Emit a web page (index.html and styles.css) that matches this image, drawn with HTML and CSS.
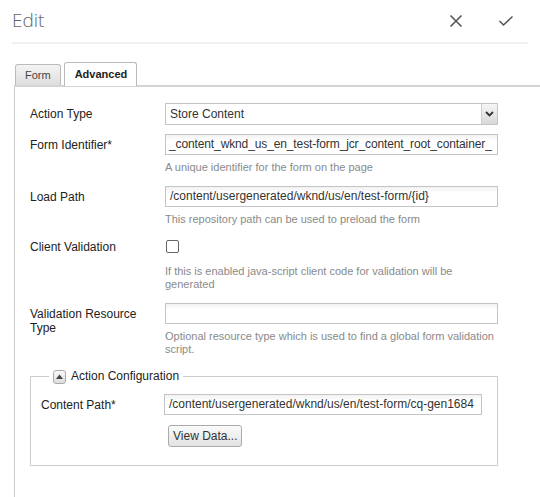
FILE: index.html
```html
<!DOCTYPE html>
<html lang="en">
  <head>
    <meta charset="UTF-8" />
    <title>Edit</title>
    <link rel="stylesheet" href="styles.css">
  </head>
  <body>
    <div class="header">
      <div class="title">Edit</div>
      <div class="actions">
        <svg class="icon" width="14" height="14" viewBox="0 0 14 14">
          <path d="M1.5 1.5 L12.5 12.5 M12.5 1.5 L1.5 12.5" stroke="#555" stroke-width="1.6" fill="none"/>
        </svg>
        <svg class="icon" width="16" height="12" viewBox="0 0 16 12">
          <path d="M1.5 6 L5.5 10 L14.5 1.5" stroke="#555" stroke-width="1.5" fill="none"/>
        </svg>
      </div>
    </div>

    <div class="tabs">
      <div class="tab">Form</div>
      <div class="tab active">Advanced</div>
    </div>

    <div class="panel">
      <div class="row">
        <div class="label">Action Type</div>
        <div class="field">
          <div class="select">
            <span class="select-text">Store Content</span>
            <span class="select-arrow">
              <svg width="9" height="6" viewBox="0 0 9 6"><path d="M1 1 L4.5 4.5 L8 1" stroke="#333" stroke-width="1.8" fill="none"/></svg>
            </span>
          </div>
        </div>
      </div>

      <div class="row row-sm">
        <div class="label">Form Identifier*</div>
        <div class="field">
          <div class="input input-tight">_content_wknd_us_en_test-form_jcr_content_root_container_</div>
          <div class="help">A unique identifier for the form on the page</div>
        </div>
      </div>

      <div class="row">
        <div class="label">Load Path</div>
        <div class="field">
          <div class="input">/content/usergenerated/wknd/us/en/test-form/{id}</div>
          <div class="help">This repository path can be used to preload the form</div>
        </div>
      </div>

      <div class="row row-check">
        <div class="label label-check">Client Validation</div>
        <div class="field">
          <div class="checkbox"></div>
          <div class="help help-check">If this is enabled java-script client code for validation will be generated</div>
        </div>
      </div>

      <div class="row">
        <div class="label">Validation Resource Type</div>
        <div class="field">
          <div class="input"></div>
          <div class="help">Optional resource type which is used to find a global form validation script.</div>
        </div>
      </div>

      <fieldset class="config">
        <legend class="config-legend">
          <span class="toggle">
            <svg width="7" height="5" viewBox="0 0 7 5"><path d="M0 5 L3.5 0.5 L7 5 Z" fill="#444"/></svg>
          </span>
          Action Configuration
        </legend>
        <div class="row row-inner">
          <div class="label label-inner">Content Path*</div>
          <div class="field field-inner">
            <div class="input">/content/usergenerated/wknd/us/en/test-form/cq-gen1684</div>
            <button class="btn">View Data...</button>
          </div>
        </div>
      </fieldset>
    </div>
  </body>
</html>
```

FILE: styles.css
```css
body
{
    margin: 0;
    background: #fff;
    font-family: Tahoma, "Liberation Sans", Arial, sans-serif;
    font-size: 12px;
    color: #222;
    overflow: hidden;
}

.header
{
    display: flex;
    justify-content: space-between;
    align-items: center;
    height: 42px;
    margin: 0 12px;
    border-bottom: 2px solid #f0f0f0;
}
.title
{
    font-family: "Open Sans", "Noto Sans", sans-serif;
    font-weight: 300;
    font-size: 19px;
    color: #666;
    margin-top: -2px;
}
.actions
{
    display: flex;
    align-items: center;
    gap: 35px;
    padding-right: 14px;
}

.tabs
{
    display: flex;
    align-items: flex-end;
    gap: 3px;
    margin-top: 18px;
    padding-left: 15px;
    height: 23px;
}
.tab
{
    box-sizing: border-box;
    height: 21px;
    padding: 0 9px;
    line-height: 20px;
    font-size: 11px;
    color: #444;
    border: 1px solid #bbb;
    border-bottom: none;
    border-radius: 3px 3px 0 0;
    background: linear-gradient(#f4f4f4, #dedede);
}
.tab.active
{
    height: 24px;
    margin-bottom: -1px;
    padding: 0 9px 0 10px;
    line-height: 22px;
    font-weight: bold;
    color: #222;
    background: #fff;
    position: relative;
}

.panel
{
    margin-left: 14px;
    width: 514px;
    border: 1px solid #ccc;
    border-top: 2px solid #d4d4d4;
    padding: 16px 0 60px 15px;
}

.row
{
    display: flex;
    margin-bottom: 12px;
}
.row-sm
{
    margin-top: -3px;
}
.row-check
{
    margin-top: 14px;
}
.label
{
    width: 135px;
    flex-shrink: 0;
    padding-top: 4px;
    line-height: 14px;
    color: #222;
}
.label-check
{
    padding-top: 0;
}
.field
{
    width: 333px;
}

.input,
.select
{
    box-sizing: border-box;
    height: 21px;
    border: 1px solid #c4c4c4;
    background: linear-gradient(#f2f2f2, #fff 6px);
    padding: 0 4px;
    line-height: 19px;
    color: #333;
    white-space: nowrap;
    overflow: hidden;
}
.input-tight
{
    padding: 0 0 0 3px;
    letter-spacing: -0.12px;
}
.select
{
    display: flex;
    justify-content: space-between;
    height: 22px;
    padding: 0 0 0 4px;
    background: #fff;
}
.select-text
{
    line-height: 20px;
}
.select-arrow
{
    display: flex;
    align-items: center;
    justify-content: center;
    width: 15px;
    border-left: 1px solid #d0d0d0;
    background: linear-gradient(#f6f6f6, #d8d8d8);
}

.help
{
    margin-top: 6px;
    font-size: 11px;
    line-height: 13px;
    color: #8a8a8a;
}
.help-check
{
    margin-top: 12px;
}
.checkbox
{
    box-sizing: border-box;
    width: 13px;
    height: 13px;
    margin-left: 1px;
    border: 1px solid #666;
    border-radius: 2px;
    background: #fff;
}

.config
{
    margin: 13px 0 0 0;
    width: 468px;
    box-sizing: border-box;
    border: 1px solid #ccc;
    padding: 10px 0 18px 10px;
}
.config-legend
{
    display: flex;
    align-items: center;
    gap: 5px;
    margin-left: 8px;
    padding: 0 4px 0 4px;
    font-size: 12px;
    color: #222;
    line-height: 15px;
}
.toggle
{
    display: flex;
    align-items: center;
    justify-content: center;
    box-sizing: border-box;
    width: 13px;
    height: 14px;
    border: 1px solid #aaa;
    border-radius: 3px;
    background: linear-gradient(#fafafa, #dcdcdc);
}
.row-inner
{
    margin-bottom: 0;
}
.label-inner
{
    width: 123px;
}
.field-inner
{
    width: 318px;
}
.btn
{
    display: block;
    margin: 10px 0 0 4px;
    height: 22px;
    padding: 0 4px;
    font-family: Tahoma, "Liberation Sans", Arial, sans-serif;
    font-size: 12px;
    color: #333;
    border: 1px solid #aaa;
    border-radius: 3px;
    background: linear-gradient(#fbfbfb, #e2e2e2);
}
```
